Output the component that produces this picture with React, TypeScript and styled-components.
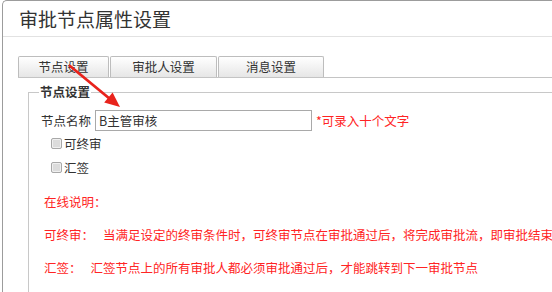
import React from "react";
import styled, { createGlobalStyle } from "styled-components";

const GlobalStyle = createGlobalStyle`
  html, body {
    margin: 0;
    padding: 0;
    background: #ffffff;
  }
  body {
    width: 552px;
    height: 292px;
    overflow: hidden;
    font-family: "Noto Sans CJK SC", "Microsoft YaHei", sans-serif;
    color: #333333;
  }
  * { box-sizing: border-box; }
`;

const Page = styled.div`
  position: relative;
  width: 552px;
  height: 292px;
  overflow: hidden;
`;

const Window = styled.div`
  margin-left: 2px;
  height: 292px;
  border-left: 1px solid #9c9c9c;
  border-top: 1px solid #9c9c9c;
  border-top-left-radius: 5px;
  display: flex;
  flex-direction: column;
`;

const Header = styled.div`
  height: 36px;
  border-bottom: 1px solid #e2e2e2;
  display: flex;
  align-items: center;
  padding-left: 16px;
  flex-shrink: 0;
`;

const Title = styled.h1`
  margin: 0;
  font-size: 19px;
  font-weight: normal;
  line-height: 1;
  color: #333333;
`;

const Body = styled.div`
  flex: 1;
  display: flex;
  flex-direction: column;
  padding: 19px 0 0 15px;
`;

const TabBar = styled.div`
  display: flex;
  gap: 1px;
  border-bottom: 1px solid #c4c4c4;
  height: 22px;
`;

const Tab = styled.div<{ $w: number }>`
  width: ${(p) => p.$w}px;
  height: 21px;
  border: 1px solid #bdbdbd;
  border-bottom: none;
  border-radius: 2px 2px 0 0;
  background: linear-gradient(#ffffff, #e6e6e6);
  display: flex;
  align-items: center;
  justify-content: center;
  font-size: 12.5px;
  color: #333333;
  line-height: 1;
`;

const Fieldset = styled.fieldset`
  flex: 1;
  margin: 6px 0 0 10px;
  padding: 0 0 0 12px;
  min-width: 0;
  border: 1px solid #c8c8c8;
  border-right: none;
  border-bottom: none;
`;

const Legend = styled.legend`
  font-size: 12.5px;
  font-weight: bold;
  line-height: 16px;
  padding: 0 1px;
  margin-left: -2px;
  color: #333333;
`;

const NameRow = styled.div`
  display: flex;
  align-items: center;
  margin-top: 10px;
  height: 21px;
`;

const Label = styled.span`
  font-size: 12.5px;
  color: #333333;
  white-space: nowrap;
`;

const TextInput = styled.input`
  width: 217px;
  height: 21px;
  margin-left: 4px;
  border: 1px solid #a9a9a9;
  padding: 0 3px;
  font-family: inherit;
  font-size: 12.5px;
  color: #333333;
  outline: none;
`;

const Hint = styled.span`
  margin-left: 4px;
  font-size: 12.5px;
  color: #ff2424;
  white-space: nowrap;
`;

const CheckRow = styled.label`
  display: flex;
  align-items: center;
  height: 24px;
  padding-left: 10px;
  gap: 2px;
  font-size: 12.5px;
  color: #333333;
`;

const Box = styled.input`
  appearance: none;
  margin: 0;
  width: 11px;
  height: 11px;
  border: 1px solid #a8a8a8;
  border-radius: 2px;
  background: #dcdcdc;
  box-shadow: inset 0 0 0 1px #f0f0f0;
`;

const Notes = styled.div`
  margin-top: 6px;
  padding-left: 3px;
`;

const NoteLine = styled.div`
  line-height: 33px;
  font-size: 12.5px;
  color: #ff2424;
  white-space: nowrap;
`;

const Term = styled.span`
  margin-right: 9px;
`;

const ArrowLayer = styled.svg`
  position: absolute;
  left: 0;
  top: 0;
  pointer-events: none;
`;

export default function App() {
  return (
    <>
      <GlobalStyle />
      <Page>
        <Window>
          <Header>
            <Title>审批节点属性设置</Title>
          </Header>
          <Body>
            <TabBar>
              <Tab $w={91}>节点设置</Tab>
              <Tab $w={107}>审批人设置</Tab>
              <Tab $w={106}>消息设置</Tab>
            </TabBar>
            <Fieldset>
              <Legend>节点设置</Legend>
              <NameRow>
                <Label>节点名称</Label>
                <TextInput defaultValue="B主管审核" />
                <Hint>*可录入十个文字</Hint>
              </NameRow>
              <CheckRow>
                <Box type="checkbox" />
                可终审
              </CheckRow>
              <CheckRow>
                <Box type="checkbox" />
                汇签
              </CheckRow>
              <Notes>
                <NoteLine>在线说明：</NoteLine>
                <NoteLine>
                  <Term>可终审：</Term>
                  当满足设定的终审条件时，可终审节点在审批通过后，将完成审批流，即审批结束
                </NoteLine>
                <NoteLine>
                  <Term>汇签：</Term>
                  汇签节点上的所有审批人都必须审批通过后，才能跳转到下一审批节点
                </NoteLine>
              </Notes>
            </Fieldset>
          </Body>
        </Window>
        <ArrowLayer width={552} height={292} viewBox="0 0 552 292">
          <line x1="70" y1="66" x2="110" y2="99" stroke="#e8231c" strokeWidth="2.8" strokeLinecap="round" />
          <polygon points="120,107 104.2,102.6 112.6,92.4" fill="#e8231c" />
        </ArrowLayer>
      </Page>
    </>
  );
}
